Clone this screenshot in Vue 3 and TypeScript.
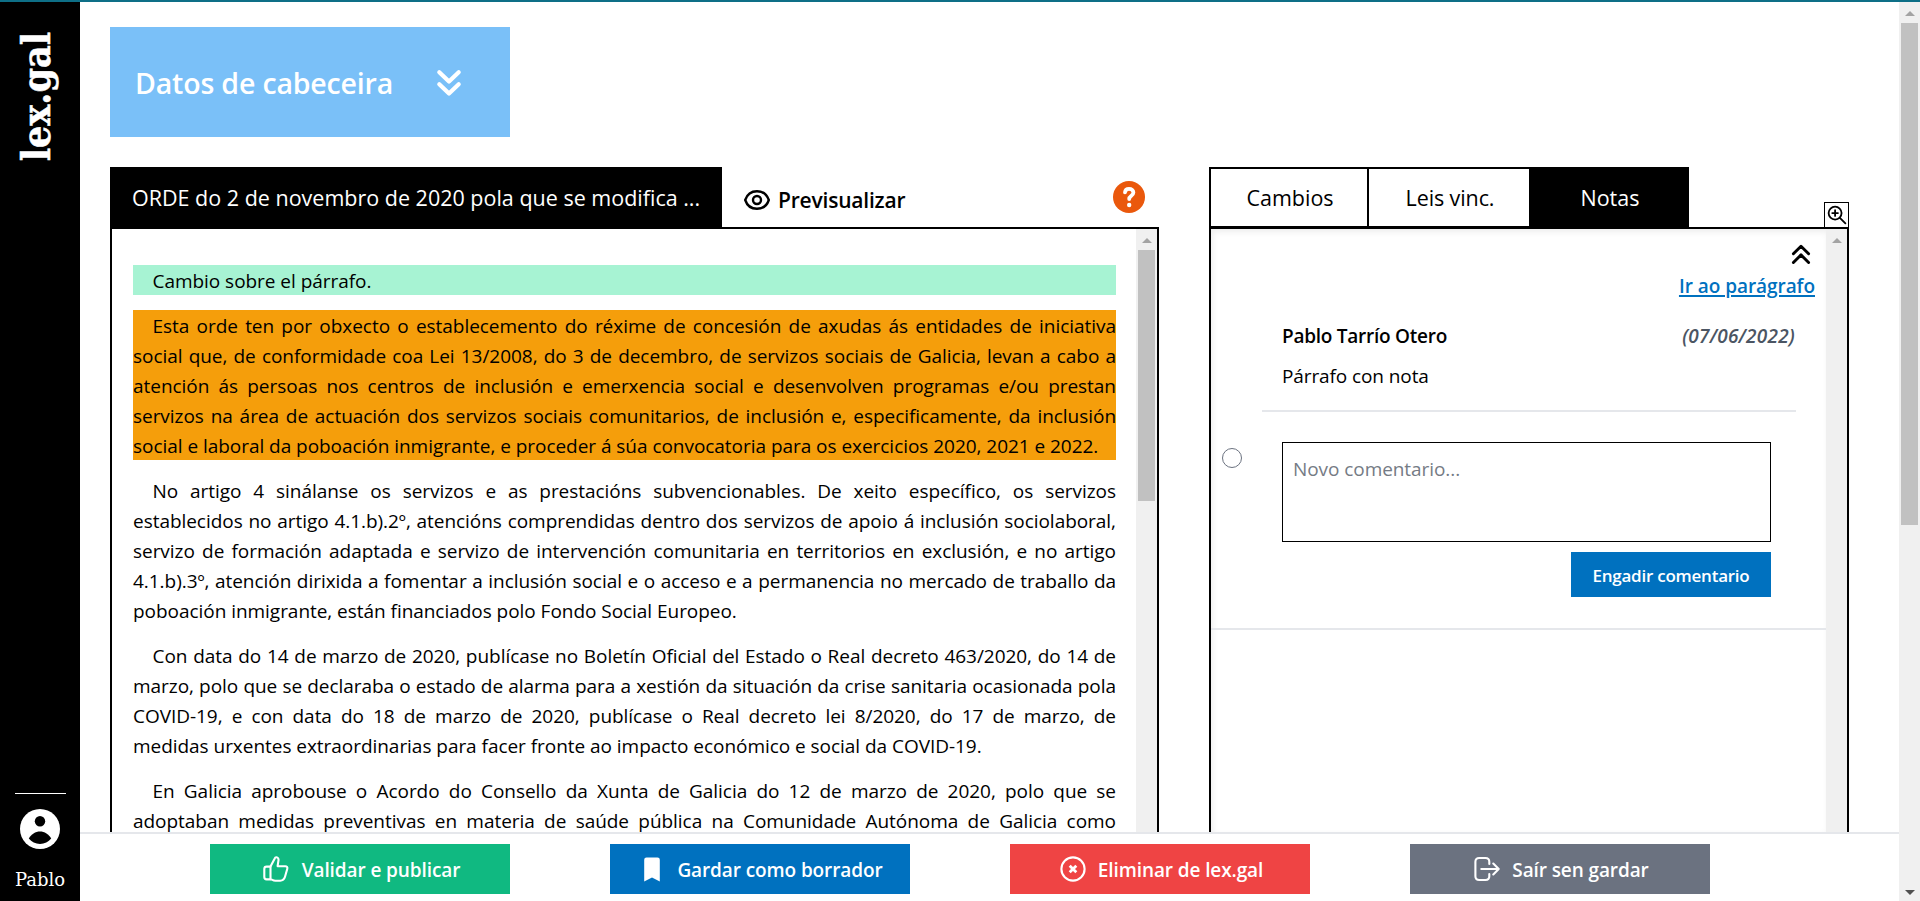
<script setup lang="ts">
interface Paragraph { lines: string[]; mark?: 'change' | 'note'; continues?: boolean }
interface Action { label: string; kind: 'publish' | 'draft' | 'delete' | 'exit' }

const paragraphs: Paragraph[] = [
  { mark: 'change', lines: ['Cambio sobre el párrafo.'] },
  {
    mark: 'note',
    lines: [
      'Esta orde ten por obxecto o establecemento do réxime de concesión de axudas ás entidades de iniciativa',
      'social que, de conformidade coa Lei 13/2008, do 3 de decembro, de servizos sociais de Galicia, levan a cabo a',
      'atención ás persoas nos centros de inclusión e emerxencia social e desenvolven programas e/ou prestan',
      'servizos na área de actuación dos servizos sociais comunitarios, de inclusión e, especificamente, da inclusión',
      'social e laboral da poboación inmigrante, e proceder á súa convocatoria para os exercicios 2020, 2021 e 2022.',
    ],
  },
  {
    lines: [
      'No artigo 4 sinálanse os servizos e as prestacións subvencionables. De xeito específico, os servizos',
      'establecidos no artigo 4.1.b).2º, atencións comprendidas dentro dos servizos de apoio á inclusión sociolaboral,',
      'servizo de formación adaptada e servizo de intervención comunitaria en territorios en exclusión, e no artigo',
      '4.1.b).3º, atención dirixida a fomentar a inclusión social e o acceso e a permanencia no mercado de traballo da',
      'poboación inmigrante, están financiados polo Fondo Social Europeo.',
    ],
  },
  {
    lines: [
      'Con data do 14 de marzo de 2020, publícase no Boletín Oficial del Estado o Real decreto 463/2020, do 14 de',
      'marzo, polo que se declaraba o estado de alarma para a xestión da situación da crise sanitaria ocasionada pola',
      'COVID-19, e con data do 18 de marzo de 2020, publícase o Real decreto lei 8/2020, do 17 de marzo, de',
      'medidas urxentes extraordinarias para facer fronte ao impacto económico e social da COVID-19.',
    ],
  },
  {
    continues: true,
    lines: [
      'En Galicia aprobouse o Acordo do Consello da Xunta de Galicia do 12 de marzo de 2020, polo que se',
      'adoptaban medidas preventivas en materia de saúde pública na Comunidade Autónoma de Galicia como',
    ],
  },
]

const actions: Action[] = [
  { label: 'Validar e publicar', kind: 'publish' },
  { label: 'Gardar como borrador', kind: 'draft' },
  { label: 'Eliminar de lex.gal', kind: 'delete' },
  { label: 'Saír sen gardar', kind: 'exit' },
]
</script>

<template>
  <div class="app">
    <div class="topline"></div>
    <div class="body">
      <aside class="side">
        <div class="logo">lex.gal</div>
        <div class="user">
          <div class="rule"></div>
          <svg class="avatar" viewBox="0 0 40 40">
            <circle cx="20" cy="20" r="20" fill="#fff" />
            <circle cx="20" cy="12.3" r="5.2" />
            <path d="M8.8 29.6C11 25 15.6 22.4 20 22.4S29 25 31.2 29.6C28.5 33 24.5 34.9 20 34.9S11.5 33 8.8 29.6Z" />
          </svg>
          <div class="name">Pablo</div>
        </div>
      </aside>

      <div class="page">
        <main class="content">
          <button class="header-data">
            <span>Datos de cabeceira</span>
            <svg width="26" height="28" viewBox="0 0 26 28" fill="none" stroke="#fff" stroke-width="4.2" stroke-linecap="round" stroke-linejoin="round">
              <path d="M3.3 3.3 13 12.6 22.7 3.3M3.3 15.3 13 24.6 22.7 15.3" />
            </svg>
          </button>

          <div class="columns">
            <section class="doc">
              <div class="doc-bar">
                <div class="doc-title">ORDE do 2 de novembro de 2020 pola que se modifica ...</div>
                <div class="preview">
                  <svg width="26" height="20" viewBox="0 0 26 20" fill="none" stroke="#000" stroke-width="2.4">
                    <path d="M1.2 10C3 4.6 7.5 1.2 13 1.2S23 4.6 24.8 10C23 15.4 18.5 18.8 13 18.8S3 15.4 1.2 10Z" />
                    <circle cx="13" cy="10" r="4" />
                  </svg>
                  <span>Previsualizar</span>
                </div>
                <svg class="help" width="32" height="32" viewBox="0 0 32 32">
                  <circle cx="16" cy="16" r="16" fill="#ea580c" />
                  <path d="M12 11.4C12.200 9 13.700 7.800 16 7.800C18.600 7.800 20.400 9.300 20.400 11.600C20.400 14.800 16.200 14.700 16.200 18" fill="none" stroke="#fff" stroke-width="3.8" stroke-linecap="round" />
                  <circle cx="16.2" cy="24" r="2.2" fill="#fff" />
                </svg>
              </div>
              <div class="panel">
                <div class="text">
                  <p v-for="(p, i) in paragraphs" :key="i" :class="p.mark">
                    <span v-for="(line, j) in p.lines" :key="j" class="line" :class="{ first: j === 0, last: !p.continues && j === p.lines.length - 1 }">{{ line }}</span>
                  </p>
                </div>
                <div class="bar doc-scroll"><i class="up"></i><b></b></div>
              </div>
            </section>

            <section class="notes">
              <div class="tabs">
                <div class="tab">Cambios</div>
                <div class="tab second">Leis vinc.</div>
                <div class="tab active">Notas</div>
                <div class="zoom">
                  <svg width="20" height="20" viewBox="0 0 21 21" fill="none" stroke="#000" stroke-width="1.9" stroke-linecap="round">
                    <circle cx="8.5" cy="8.5" r="6.8" />
                    <path d="M13.5 13.5 19.3 19.3M5.5 8.5h6M8.5 5.5v6" />
                  </svg>
                </div>
              </div>
              <div class="panel">
                <div class="list">
                  <div class="note">
                    <svg class="collapse" width="20" height="21" viewBox="0 0 20 21" fill="none" stroke="#000" stroke-width="2.9" stroke-linecap="round" stroke-linejoin="round">
                      <path d="M2.4 9.8 10 2.2 17.6 9.8M2.400 18.500 10 10.900 17.600 18.500" />
                    </svg>
                    <a class="goto">Ir ao parágrafo</a>
                    <div class="note-row">
                      <span class="radio"></span>
                      <div class="thread">
                        <div class="comment">
                          <div class="meta"><span class="author">Pablo Tarrío Otero</span><span class="date">(07/06/2022)</span></div>
                          <div class="msg">Párrafo con nota</div>
                        </div>
                        <div class="reply">
                          <div class="area">Novo comentario...</div>
                          <button class="add">Engadir comentario</button>
                        </div>
                      </div>
                    </div>
                  </div>
                </div>
                <div class="bar"><i class="up"></i></div>
              </div>
            </section>
          </div>
        </main>

        <footer class="foot">
          <button v-for="a in actions" :key="a.kind" class="act" :class="a.kind">
            <svg v-if="a.kind === 'publish'" width="26" height="26" viewBox="0 0 26 26" fill="none" stroke="#fff" stroke-width="2.1" stroke-linejoin="round" stroke-linecap="round">
              <path d="M7.5 10.6 11.6 2.7C12 1.7 12.5 1.2 13.4 1.3C15 1.5 15.7 2.7 15.5 4.2L14.6 10.2H22.3C23.8 10.2 24.7 11.3 24.3 12.8L22 20.8C21.3 23.2 19.8 24.7 17.2 24.7H12.5C10.3 24.7 9.2 23.7 7.5 23Z" />
              <path d="M7.5 10.6H3.6C2.2 10.6 1.3 11.5 1.3 12.9V21C1.3 22.5 2.2 23.4 3.6 23.4H7.5" />
            </svg>
            <svg v-else-if="a.kind === 'draft'" width="16" height="25" viewBox="0 0 16 25" fill="#fff">
              <path d="M2.5.5h11A2.3 2.3 0 0 1 15.8 2.8V24.500L8 20.5.2 24.500V2.800A2.300 2.300 0 0 1 2.500.5Z" />
            </svg>
            <svg v-else-if="a.kind === 'delete'" width="26" height="26" viewBox="0 0 26 26" fill="none" stroke="#fff" stroke-width="2.1">
              <circle cx="13" cy="13" r="11.6" />
              <path d="M9.7 9.7 16.3 16.3M16.3 9.7 9.7 16.3" stroke-width="2.8" />
            </svg>
            <svg v-else width="26" height="26" viewBox="0 0 26 26" fill="none" stroke="#fff" stroke-width="2.1" stroke-linecap="round" stroke-linejoin="round">
              <path d="M15.3 8V5.7C15.3 3.2 14 2 11.5 2H5.2C2.7 2 1.4 3.2 1.4 5.7V20.3C1.4 22.800 2.7 24 5.2 24H11.5C14 24 15.3 22.800 15.3 20.3V18" />
              <path d="M7.3 13H24.3M19.3 7.6 24.7 13 19.3 18.4" />
            </svg>
            <span>{{ a.label }}</span>
          </button>
        </footer>
      </div>

      <div class="bar page-scroll"><i class="up"></i><b></b><i class="down"></i></div>
    </div>
  </div>
</template>

<style>
html, body { margin: 0; background: #fff; overflow: hidden; }
</style>

<style scoped>
.app { height: 901px; width: 1920px; display: flex; flex-direction: column; font-family: 'Open Sans', 'Noto Sans', sans-serif; font-size: 19px; color: #000; overflow: hidden; }
.app * { box-sizing: border-box; }
button { border: 0; border-radius: 0; padding: 0; font: inherit; color: #fff; white-space: nowrap; }
svg { display: block; flex: none; }
.topline { height: 2px; background: #0e6f87; flex: none; }
.body { flex: 1; display: flex; min-height: 0; }

.side { width: 80px; background: #000; color: #fff; display: flex; flex-direction: column; align-items: center; justify-content: space-between; padding: 30px 0 9px; }
.logo { writing-mode: vertical-rl; transform: rotate(180deg); font-family: 'DejaVu Serif Condensed', 'DejaVu Serif', serif; font-weight: 700; font-size: 39px; line-height: 48px; white-space: nowrap; margin-right: 8px; -webkit-text-stroke: .5px #fff; }
.user { display: flex; flex-direction: column; align-items: center; }
.rule { width: 51px; height: 1px; background: #fff; }
.avatar { width: 40px; height: 40px; margin-top: 15px; }
.name { font-family: 'DejaVu Serif', serif; font-size: 18px; line-height: 24px; margin-top: 19px; }

.page { flex: 1; display: flex; flex-direction: column; min-width: 0; }
.content { flex: 1; min-height: 0; overflow: hidden; padding: 25px 0 0 30px; display: flex; flex-direction: column; }
.header-data { width: 400px; height: 110px; flex: none; background: #7ac0f8; display: flex; align-items: center; justify-content: space-between; padding: 2px 48px 0 25px; font-size: 28.5px; font-weight: 600; letter-spacing: -.17px; }
.columns { display: flex; gap: 50px; margin-top: 30px; flex: 1; min-height: 0; }
.doc { width: 1049px; display: flex; flex-direction: column; }
.doc-bar { height: 60px; flex: none; display: flex; align-items: center; }
.doc-title { width: 612px; height: 60px; background: #000; color: #fff; font-size: 21.5px; line-height: 60px; padding: 1px 0 0 22px; white-space: nowrap; }
.preview { display: flex; align-items: center; gap: 8px; margin-left: 22px; padding-top: 6px; font-size: 21px; font-weight: 600; letter-spacing: -.2px; line-height: 30px; }
.help { margin: 0 14px 0 auto; }
.panel { flex: 1; min-height: 0; border: 2px solid #000; border-bottom: 0; display: flex; overflow: hidden; }
.text { flex: 1; padding: 36px 20px 0 21px; letter-spacing: -.04px; }
.text p { margin: 0 0 15px; }
.text .change { background: #a7f3d3; }
.text .note { background: #f59e0b; }
.line { display: block; height: 30px; line-height: 28px; padding-top: 2px; white-space: nowrap; text-align: justify; text-align-last: justify; }
.line.first { padding-left: 19.5px; }
.line.last { text-align-last: left; }

.bar { width: 21px; flex: none; background: #f0f0f0; display: flex; flex-direction: column; align-items: center; }
.bar i { width: 0; height: 0; flex: none; border: 5px solid transparent; border-top: 0; border-bottom: 5px solid #a3a3a3; margin-top: 9px; }
.bar b { width: 17px; background: #c1c1c1; }
.doc-scroll b { height: 251px; margin-top: 7px; }
.page-scroll b { height: 502px; margin-top: 7px; }
.bar i.down { border-top: 5px solid #505050; border-bottom: 0; margin: auto 0 6px; }

.notes { width: 640px; display: flex; flex-direction: column; }
.tabs { height: 60px; flex: none; display: flex; }
.tab { width: 160px; height: 60px; border: 2px solid #000; border-bottom-width: 1px; text-align: center; font-size: 21.5px; line-height: 57px; padding-left: 2px; }
.tab.second { border-left: 0; border-right: 0; letter-spacing: -.1px; }
.tab.active { background: #000; color: #fff; }
.zoom { width: 25px; height: 25px; margin: auto 0 0 auto; border: 1px solid #000; border-bottom: 0; padding: 2px; }
.list { flex: 1; box-shadow: inset 2px 3px 6px rgba(0, 0, 0, .07); }
.list > .note { border-bottom: 2px solid #e5e7eb; height: 401px; display: flex; flex-direction: column; }
.collapse { margin: 15px 15px 0 auto; }
.goto { margin: 9px 11px 0 auto; color: #0071bf; font-weight: 600; line-height: 24px; text-decoration: underline; text-decoration-thickness: 2px; text-underline-offset: 2px; letter-spacing: -.05px; }
.note-row { display: flex; }
.radio { width: 20px; height: 20px; border: 1px solid #6b7280; border-radius: 50%; margin: 150px 20px 0 11px; }
.thread { width: 534px; }
.comment { padding: 26px 1px 22px 20px; border-bottom: 2px solid #e5e7eb; line-height: 24px; }
.meta { display: flex; justify-content: space-between; font-weight: 600; }
.author { letter-spacing: -.25px; }
.date { font-style: italic; color: #4b5563; letter-spacing: .22px; }
.msg { margin-top: 16px; letter-spacing: -.1px; }
.reply { padding: 30px 25px 0 20px; display: flex; flex-direction: column; }
.area { height: 100px; border: 1px solid #000; padding: 14px 10px; line-height: 24px; color: #757b85; letter-spacing: -.07px; }
.add { width: 200px; height: 45px; margin: 10px 0 0 auto; background: #0071bf; font-size: 17px; font-weight: 600; letter-spacing: -.24px; padding-top: 2px; }

.foot { height: 69px; flex: none; border-top: 2px solid #e5e7eb; padding: 10px 0 0 130px; display: flex; gap: 100px; }
.act { width: 300px; height: 50px; display: flex; align-items: center; justify-content: center; gap: 12px; font-weight: 600; letter-spacing: -.1px; padding-left: 3px; }
.act span { padding-top: 1px; }
.publish { background: #10b981; gap: 13px; }
.draft { background: #0071bf; gap: 17px; padding-left: 7px; }
.delete { background: #ef4444; }
.exit { background: #6b7280; }
</style>
